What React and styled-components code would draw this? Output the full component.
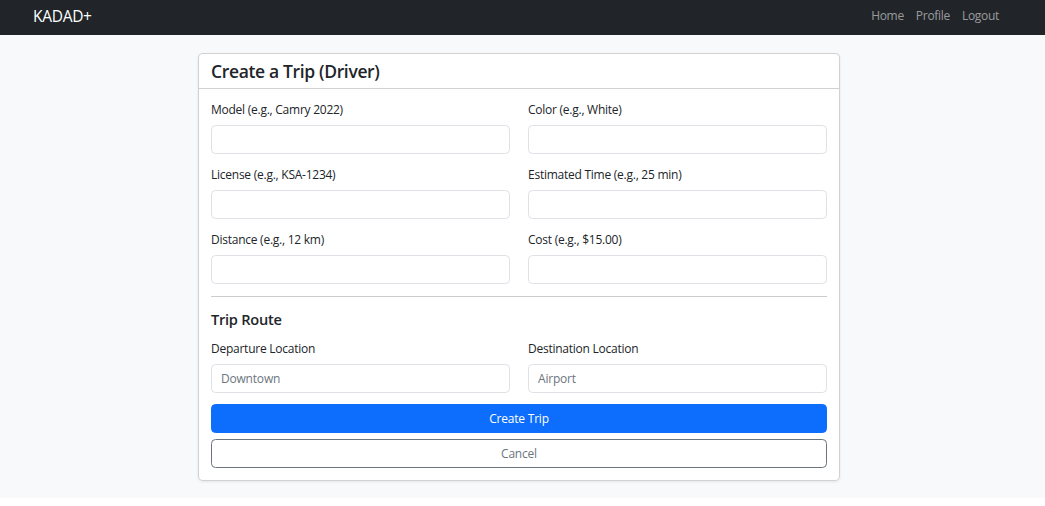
import React from "react";
import styled, { createGlobalStyle } from "styled-components";

const Global = createGlobalStyle`
  * { box-sizing: border-box; }
  html, body { margin: 0; padding: 0; background: #fff; }
  body {
    font-family: "Open Sans", "Noto Sans", "Liberation Sans", sans-serif;
    color: #212529;
  }
`;

const Nav = styled.nav`
  height: 35px;
  background: #212529;
  display: flex;
  align-items: center;
  justify-content: space-between;
  padding: 0 40px 4px 33px;
`;

const Brand = styled.a`
  color: #fff;
  font-size: 15.5px;
  text-decoration: none;
  letter-spacing: -0.3px;
`;

const NavLinks = styled.div`
  display: flex;
`;

const NavLink = styled.a`
  color: rgba(255, 255, 255, 0.55);
  font-size: 12px;
  padding: 0 6px;
  text-decoration: none;
  letter-spacing: -0.3px;
`;

const Main = styled.main`
  background: #f8f9fa;
  padding: 18px 205px 17px 198px;
`;

const Card = styled.section`
  background: #fff;
  border: 1px solid rgba(0, 0, 0, 0.175);
  border-radius: 5px;
  box-shadow: 0 1px 3px rgba(0, 0, 0, 0.08);
`;

const CardHeader = styled.header`
  border-bottom: 1px solid rgba(0, 0, 0, 0.175);
  padding: 6px 12px;
  height: 35px;
  display: flex;
  align-items: center;
`;

const Title = styled.h5`
  margin: 0;
  font-size: 17.5px;
  font-weight: 600;
  letter-spacing: -0.35px;
`;

const CardBody = styled.div`
  padding: 11px 12px 12px;
`;

const Grid = styled.div`
  display: grid;
  grid-template-columns: 1fr 1fr;
  column-gap: 18px;
`;

const Field = styled.div`
  margin-bottom: 11px;
`;

const Label = styled.label`
  display: block;
  font-size: 12px;
  line-height: 19px;
  margin-bottom: 6px;
  letter-spacing: -0.25px;
`;

const Input = styled.input`
  display: block;
  width: 100%;
  height: 29px;
  border: 1px solid #dee2e6;
  border-radius: 4.5px;
  padding: 0 9px;
  font-family: inherit;
  font-size: 12px;
  letter-spacing: -0.2px;
  color: #212529;
  background: #fff;
  &::placeholder { color: #6c757d; }
`;

const Divider = styled.hr`
  margin: 1px 0 0;
  border: 0;
  border-top: 1px solid rgba(0, 0, 0, 0.2);
`;

const Section = styled.h6`
  margin: 13px 0 10px;
  font-size: 14.6px;
  line-height: 19px;
  font-weight: 600;
  letter-spacing: -0.25px;
`;

const Button = styled.button`
  display: block;
  width: 100%;
  height: 29px;
  border-radius: 4.5px;
  font-family: inherit;
  font-size: 12px;
  letter-spacing: -0.2px;
  cursor: pointer;
  border: 1px solid ${(p) => (p.$outline ? "#6c757d" : "#0d6efd")};
  background: ${(p) => (p.$outline ? "#fff" : "#0d6efd")};
  color: ${(p) => (p.$outline ? "#6c757d" : "#fff")};
  margin-top: ${(p) => (p.$outline ? "6px" : "0")};
`;

const fields = [
  ["Model (e.g., Camry 2022)", "Color (e.g., White)"],
  ["License (e.g., KSA-1234)", "Estimated Time (e.g., 25 min)"],
  ["Distance (e.g., 12 km)", "Cost (e.g., $15.00)"],
];

export default function App() {
  return (
    <>
      <Global />
      <Nav>
        <Brand href="#">KADAD+</Brand>
        <NavLinks>
          <NavLink href="#">Home</NavLink>
          <NavLink href="#">Profile</NavLink>
          <NavLink href="#">Logout</NavLink>
        </NavLinks>
      </Nav>
      <Main>
        <Card>
          <CardHeader>
            <Title>Create a Trip (Driver)</Title>
          </CardHeader>
          <CardBody>
            <Grid>
              {fields.flat().map((l) => (
                <Field key={l}>
                  <Label>{l}</Label>
                  <Input />
                </Field>
              ))}
            </Grid>
            <Divider />
            <Section>Trip Route</Section>
            <Grid>
              <Field>
                <Label>Departure Location</Label>
                <Input placeholder="Downtown" />
              </Field>
              <Field>
                <Label>Destination Location</Label>
                <Input placeholder="Airport" />
              </Field>
            </Grid>
            <Button>Create Trip</Button>
            <Button $outline>Cancel</Button>
          </CardBody>
        </Card>
      </Main>
    </>
  );
}
